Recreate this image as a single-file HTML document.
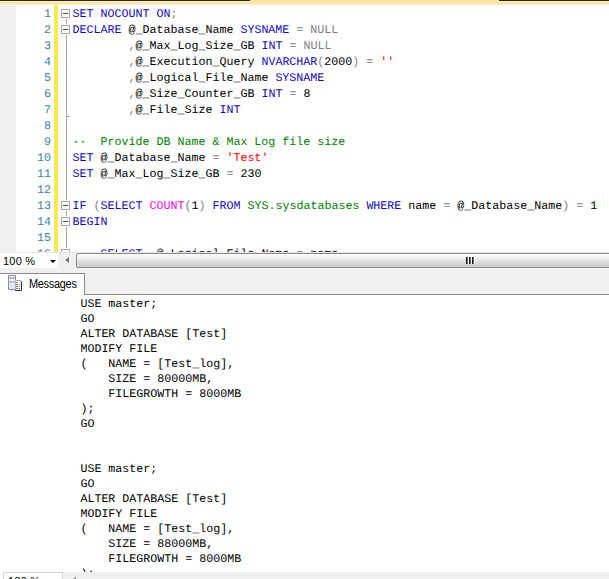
<!DOCTYPE html>
<html><head><meta charset="utf-8">
<style>
*{margin:0;padding:0;box-sizing:border-box}
html,body{width:609px;height:579px;overflow:hidden;background:#fff;position:relative}
.abs{position:absolute}
.mono{font-family:"Liberation Mono",monospace;font-size:11.67px;text-rendering:geometricPrecision;white-space:pre}
.sans{font-family:"Liberation Sans",sans-serif;white-space:pre}
#topline{left:0;top:0;width:609px;height:6px;background:linear-gradient(#fde4a3 0,#fde4a3 4px,#faf0d4 4px,#faf0d4 5px,#fffdf0 5px)}
.dark{top:0;height:2px;background:linear-gradient(#262616 0,#262616 1px,#fff2cc 1px)}
#margin{left:0;top:5px;width:16px;height:247px;background:#f0f0f0}
#yellow{left:54px;top:5px;width:4px;height:247px;background:#fde84e}
.vl{left:66px;width:1px;background:#a5a5a5}
.box{width:9px;height:9px;border:1px solid #a8a8a8;background:#fff;left:61px}
.box::after{content:"";position:absolute;left:1px;top:3px;width:5px;height:1px;background:#505050}
.ln{left:16px;width:35px;text-align:right;color:#3a82a2;height:16px;line-height:16px}
.code{left:72.5px;height:16px;line-height:16px;color:#000}
.k{color:#1208b4}.g{color:#808080}.s{color:#ff0000}.c{color:#008000}.f{color:#ff00ff}
#status{left:0;top:252px;width:609px;height:42px;background:#f0f0f0}
#combo{left:0;top:253px;width:58px;height:15px;background:#fff}
#msgs{left:0;top:295px;width:609px;height:277px;background:#fff}
.mline{left:80.4px;height:15px;line-height:15px;color:#000}
</style></head><body>
<div class="abs" id="topline"></div>
<div class="abs dark" style="left:0;width:250px"></div>
<div class="abs dark" style="left:499px;width:110px"></div>
<div class="abs" id="margin"></div>
<div class="abs" id="yellow"></div>
<div class="abs vl" style="top:19px;height:5px"></div>
<div class="abs vl" style="top:35px;height:165px"></div>
<div class="abs vl" style="top:211px;height:5px"></div>
<div class="abs vl" style="top:227px;height:21px"></div>
<div class="abs" style="left:66px;top:116px;width:4px;height:1px;background:#a5a5a5"></div>
<div class="abs box" style="top:9px"></div>
<div class="abs box" style="top:25px"></div>
<div class="abs box" style="top:201px"></div>
<div class="abs box" style="top:217px"></div>
<div class="abs box" style="top:249px"></div>

<div class="abs mono ln" style="top:6px">1</div>
<div class="abs mono ln" style="top:22px">2</div>
<div class="abs mono ln" style="top:38px">3</div>
<div class="abs mono ln" style="top:54px">4</div>
<div class="abs mono ln" style="top:70px">5</div>
<div class="abs mono ln" style="top:86px">6</div>
<div class="abs mono ln" style="top:102px">7</div>
<div class="abs mono ln" style="top:118px">8</div>
<div class="abs mono ln" style="top:134px">9</div>
<div class="abs mono ln" style="top:150px">10</div>
<div class="abs mono ln" style="top:166px">11</div>
<div class="abs mono ln" style="top:182px">12</div>
<div class="abs mono ln" style="top:198px">13</div>
<div class="abs mono ln" style="top:214px">14</div>
<div class="abs mono ln" style="top:230px">15</div>
<div class="abs mono ln" style="top:246px">16</div>

<div class="abs mono code" style="top:6px"><span class="k">SET NOCOUNT ON</span><span class="g">;</span></div>
<div class="abs mono code" style="top:22px"><span class="k">DECLARE</span> @_Database_Name <span class="k">SYSNAME</span> <span class="g">=</span> <span class="g">NULL</span></div>
<div class="abs mono code" style="top:38px">        <span class="g">,</span>@_Max_Log_Size_GB <span class="k">INT</span> <span class="g">=</span> <span class="g">NULL</span></div>
<div class="abs mono code" style="top:54px">        <span class="g">,</span>@_Execution_Query <span class="k">NVARCHAR</span><span class="g">(</span>2000<span class="g">)</span> <span class="g">=</span> <span class="s">''</span></div>
<div class="abs mono code" style="top:70px">        <span class="g">,</span>@_Logical_File_Name <span class="k">SYSNAME</span></div>
<div class="abs mono code" style="top:86px">        <span class="g">,</span>@_Size_Counter_GB <span class="k">INT</span> <span class="g">=</span> 8</div>
<div class="abs mono code" style="top:102px">        <span class="g">,</span>@_File_Size <span class="k">INT</span></div>
<div class="abs mono code c" style="top:134px">--  Provide DB Name &amp; Max Log file size</div>
<div class="abs mono code" style="top:150px"><span class="k">SET</span> @_Database_Name <span class="g">=</span> <span class="s">'Test'</span></div>
<div class="abs mono code" style="top:166px"><span class="k">SET</span> @_Max_Log_Size_GB <span class="g">=</span> 230</div>
<div class="abs mono code" style="top:198px"><span class="k">IF</span> <span class="g">(</span><span class="k">SELECT</span> <span class="f">COUNT</span><span class="g">(</span>1<span class="g">)</span> <span class="k">FROM</span> <span class="c">SYS.sysdatabases</span> <span class="k">WHERE</span> name <span class="g">=</span> @_Database_Name<span class="g">)</span> <span class="g">=</span> 1</div>
<div class="abs mono code" style="top:214px"><span class="k">BEGIN</span></div>
<div class="abs mono code" style="top:246px">    <span class="k">SELECT</span>  @_Logical_File_Name <span class="g">=</span> name</div>

<!-- status bar / tab strip -->
<div class="abs" id="status"></div>
<div class="abs" style="left:0;top:252px;width:609px;height:1px;background:#e6e6e6"></div>
<div class="abs" id="combo"></div>
<div class="abs sans" style="left:3px;top:254px;font-size:11px;letter-spacing:0.2px;line-height:15px;color:#000">100 %</div>
<svg class="abs" style="left:0;top:0" width="609" height="579">
  <path d="M50 260 L56 260 L53 263 Z" fill="#000"/>
  <path d="M69 257 L69 263 L65 260 Z" fill="#7a7a7a"/>
</svg>
<div class="abs" style="left:76px;top:253px;width:540px;height:15px;border:1px solid #8a8a8a;border-radius:2px;background:linear-gradient(#fdfdfd 0,#f2f2f2 30%,#e2e2e2 50%,#cdcdcd 100%);box-shadow:inset 0 1px 0 #fff"></div>
<div class="abs" style="left:466px;top:257px;width:2px;height:7px;background:linear-gradient(90deg,#1a1a1a 50%,#6a6a6a 50%);box-shadow:1px 0 0 #fff"></div>
<div class="abs" style="left:469px;top:257px;width:2px;height:7px;background:linear-gradient(90deg,#1a1a1a 50%,#6a6a6a 50%);box-shadow:1px 0 0 #fff"></div>
<div class="abs" style="left:472px;top:257px;width:2px;height:7px;background:linear-gradient(90deg,#1a1a1a 50%,#6a6a6a 50%);box-shadow:1px 0 0 #fff"></div>

<!-- tab -->
<div class="abs" style="left:0;top:273px;width:85px;height:22px;background:#fff;border-top:1px solid #8a8a8a;border-right:1px solid #8a8a8a"></div>
<div class="abs" style="left:85px;top:294px;width:524px;height:1px;background:#8a8a8a"></div>
<svg class="abs" style="left:0;top:270px" width="30" height="25">
  <rect x="8.5" y="5.5" width="7" height="14" fill="#eef1f8" stroke="#8a90a8"/>
  <rect x="9" y="7" width="6" height="2" fill="#b8bfd0"/>
  <rect x="9" y="11" width="6" height="2" fill="#b8bfd0"/>
  <rect x="9" y="14" width="6" height="5" fill="#dfe6f2"/>
  <path d="M15.5 20.5 L15.5 10.5 L20 10.5" fill="none" stroke="#9098b8"/>
  <path d="M15 10 L20 10 L22 12 L22 21 L15 21 Z" fill="#fff"/>
  <path d="M15.5 10.5 L20 10.5" stroke="#a8b0c8" fill="none"/>
  <path d="M15.5 10.5 L15.5 20.5" stroke="#a8b0c8" fill="none"/>
  <path d="M20 10.5 L21.5 12 L21.5 20.5 L15 20.5" stroke="#283050" fill="none"/>
  <rect x="16" y="12" width="2" height="1" fill="#d08060"/>
  <rect x="16" y="14" width="2" height="1" fill="#c85040"/>
  <rect x="16" y="16" width="2" height="1" fill="#c85040"/>
  <rect x="16" y="18" width="2" height="1" fill="#b06040"/>
  <rect x="19" y="14" width="1" height="1" fill="#70a060"/>
  <rect x="19" y="16" width="1" height="1" fill="#608050"/>
  <rect x="19" y="18" width="1" height="1" fill="#303850"/>
</svg>
<div class="abs sans" style="left:28.5px;top:277px;font-size:12px;letter-spacing:-0.3px;line-height:15px;color:#000;transform:scaleX(0.91);transform-origin:0 0">Messages</div>

<div class="abs" id="msgs"></div>
<div class="abs mono mline" style="top:297px">USE master;</div>
<div class="abs mono mline" style="top:312px">GO</div>
<div class="abs mono mline" style="top:327px">ALTER DATABASE [Test]</div>
<div class="abs mono mline" style="top:342px">MODIFY FILE</div>
<div class="abs mono mline" style="top:357px">(   NAME = [Test_log],</div>
<div class="abs mono mline" style="top:372px">    SIZE = 80000MB,</div>
<div class="abs mono mline" style="top:387px">    FILEGROWTH = 8000MB</div>
<div class="abs mono mline" style="top:402px">);</div>
<div class="abs mono mline" style="top:417px">GO</div>
<div class="abs mono mline" style="top:462px">USE master;</div>
<div class="abs mono mline" style="top:477px">GO</div>
<div class="abs mono mline" style="top:492px">ALTER DATABASE [Test]</div>
<div class="abs mono mline" style="top:507px">MODIFY FILE</div>
<div class="abs mono mline" style="top:522px">(   NAME = [Test_log],</div>
<div class="abs mono mline" style="top:537px">    SIZE = 88000MB,</div>
<div class="abs mono mline" style="top:552px">    FILEGROWTH = 8000MB</div>
<div class="abs mono mline" style="top:567px">);</div>

<!-- bottom status bar -->
<div class="abs" style="left:63px;top:572px;width:546px;height:7px;background:#f0f0f0"></div>
<div class="abs" style="left:3px;top:572px;width:60px;height:10px;background:#fff;border:1px solid #d4d4d4"></div>
<div class="abs sans" style="left:8px;top:574px;font-size:11px;letter-spacing:0.2px;line-height:15px;color:#000">100 %</div>
<svg class="abs" style="left:0;top:570px" width="90" height="9">
  <path d="M76 7 L76 13 L72 10 Z" fill="#7a7a7a"/>
</svg>
</body></html>
